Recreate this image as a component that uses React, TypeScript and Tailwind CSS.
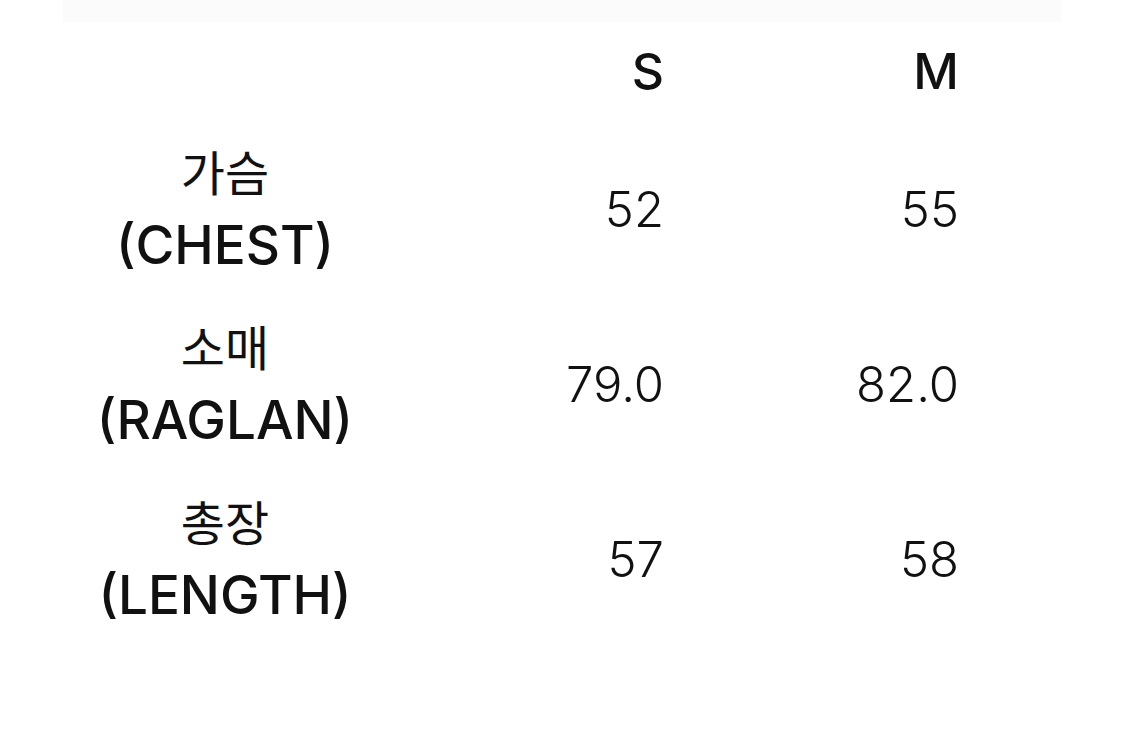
const rows = [
  { ko: "가슴", en: "(CHEST)", s: "52", m: "55" },
  { ko: "소매", en: "(RAGLAN)", s: "79.0", m: "82.0" },
  { ko: "총장", en: "(LENGTH)", s: "57", m: "58" },
];

const latin = { fontFamily: "Inter, sans-serif" };

export default function App() {
  return (
    <div
      className="w-[1125px] h-[739px] bg-white text-[#111] overflow-hidden"
      style={{ fontFamily: '"Noto Sans CJK KR", "Noto Sans", sans-serif' }}
    >
      <div className="mx-[63px] h-[22px] bg-[#fbfbfb]" />
      <div className="grid grid-cols-[450px_214px_295px] items-center">
        <div className="h-[98px]" />
        <div className="text-right text-[50px] font-medium leading-none" style={latin}>
          S
        </div>
        <div className="text-right text-[50px] font-medium leading-none" style={latin}>
          M
        </div>

        {rows.map((r) => (
          <div key={r.en} className="contents">
            <div className="flex flex-col items-center h-[175px] justify-center leading-[75px]">
              <span className="text-[48px]">{r.ko}</span>
              <span className="text-[53px] font-medium" style={latin}>
                {r.en}
              </span>
            </div>
            <div className="text-right text-[49px] font-light leading-none pt-[4px]" style={latin}>
              {r.s}
            </div>
            <div className="text-right text-[49px] font-light leading-none pt-[4px]" style={latin}>
              {r.m}
            </div>
          </div>
        ))}
      </div>
    </div>
  );
}
